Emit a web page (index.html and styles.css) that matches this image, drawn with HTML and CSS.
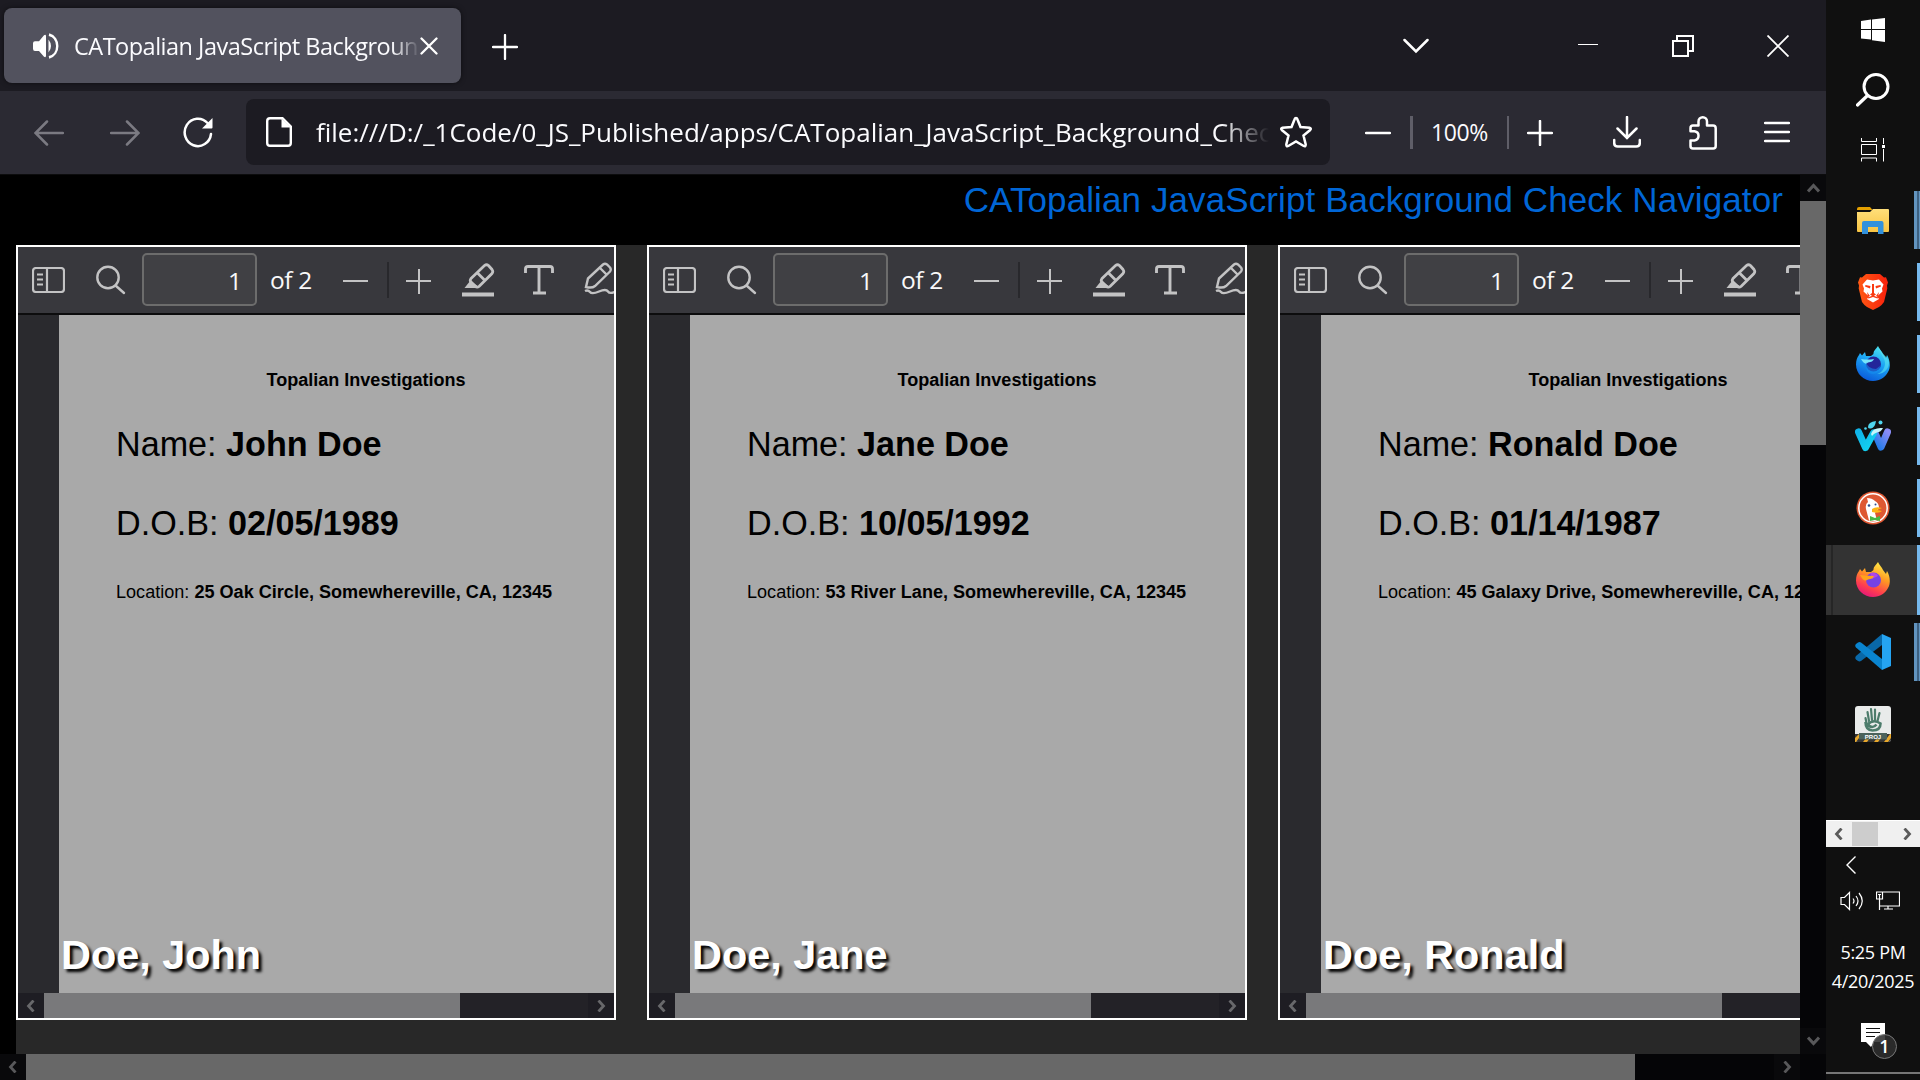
FILE: index.html
```html
<!DOCTYPE html>
<html lang="en">
<head>
<meta charset="utf-8">
<title>CATopalian JavaScript Background Check Navigator</title>
<link rel="stylesheet" href="styles.css">
</head>
<body>
<svg class="defs" width="0" height="0">
  <defs>
    <linearGradient id="g-brave"><stop offset="0" stop-color="#ff5a14"/><stop offset="1" stop-color="#f9200c"/></linearGradient>
    <linearGradient id="g-dev" x1="0.7" y1="0" x2="0.3" y2="1"><stop offset="0" stop-color="#4fe5ef"/><stop offset=".45" stop-color="#1ba4f5"/><stop offset="1" stop-color="#0a58d8"/></linearGradient>
    <linearGradient id="g-fox" x1="0.75" y1="0" x2="0.3" y2="1"><stop offset="0" stop-color="#fff04a"/><stop offset=".4" stop-color="#ff9a22"/><stop offset=".75" stop-color="#ff3d4f"/><stop offset="1" stop-color="#e3167c"/></linearGradient>
    <linearGradient id="g-w1" x1="0" y1="0" x2="1" y2="1"><stop offset="0" stop-color="#10b4e8"/><stop offset="1" stop-color="#12d5f2"/></linearGradient>
    <linearGradient id="g-w2" x1="0" y1="1" x2="1" y2="0"><stop offset="0" stop-color="#1579e8"/><stop offset="1" stop-color="#8a8cf5"/></linearGradient>
    <linearGradient id="g-folder" x1="0" y1="0" x2="0" y2="1"><stop offset="0" stop-color="#ffdf7a"/><stop offset="1" stop-color="#f8c443"/></linearGradient>
  </defs>
  <symbol id="i-sidebar" viewBox="0 0 33 26"><g fill="none" stroke="#c3c3c4" stroke-width="2.200"><rect x="1" y="1" width="31" height="24" rx="3"/><path d="M15 1v24M5 7.500h6M5 12.500h6M5 17.500h6"/></g></symbol>
  <symbol id="i-find" viewBox="0 0 30 30"><g fill="none" stroke="#c3c3c4" stroke-width="2.400" stroke-linecap="round"><circle cx="12" cy="12.500" r="10.700"/><path d="M19.500 20.500l8.500 7.500"/></g></symbol>
  <symbol id="i-marker" viewBox="0 0 33 34"><path d="M0 29.500h32v4H0z" fill="#c3c3c4"/><path d="M2.500 25l6-7.500 7 5.500-1.500 2z" fill="#c3c3c4"/><path d="M9 15.500L22.500 2.500q2-1.500 4 0l3.500 4q1.500 2 0 4L17 23.500q-2 1.500-4-.5L9 19q-1.500-1.500 0-3.500zM15 9.500l8 8" fill="none" stroke="#c3c3c4" stroke-width="2.800"/></symbol>
  <symbol id="i-text" viewBox="0 0 30 30"><path d="M1.500 8V4q0-2.500 2.500-2.500h22q2.500 0 2.500 2.500v4M15 2v26M9 28h13" fill="none" stroke="#c3c3c4" stroke-width="2.900"/></symbol>
  <symbol id="i-pen" viewBox="0 0 34 34"><path d="M2 25l2-8.500L19 2.500q2-1.500 4 0l3 3q1.500 2 0 4L11 24q-3 2.500-9 1zM16 6l7 7" fill="none" stroke="#c3c3c4" stroke-width="2.400"/><path d="M1 29q3-1.500 5 1t9-.5 9 0 9-.5" fill="none" stroke="#c3c3c4" stroke-width="2.400"/></symbol>
  <symbol id="i-left" viewBox="0 0 8 12"><path d="M6.500 0.500L1.500 6l5 5.500" fill="none" stroke="currentColor" stroke-width="2.800"/></symbol>
  <symbol id="i-right" viewBox="0 0 8 12"><path d="M1.500 0.500L6.500 6l-5 5.500" fill="none" stroke="currentColor" stroke-width="2.800"/></symbol>
  <symbol id="i-up" viewBox="0 0 13 10"><path d="M1 8.500L6.500 2.500l5.500 6" fill="none" stroke="currentColor" stroke-width="3"/></symbol>
  <symbol id="i-down" viewBox="0 0 13 10"><path d="M1 1.500L6.500 7.500l5.500-6" fill="none" stroke="currentColor" stroke-width="3"/></symbol>
  <symbol id="i-fox" viewBox="0 0 34 35"><path d="M22 0c1 3 4 5 5 8l3 4 1-3c3 5 4 12 1 17-3 5.500-8 9-15 9C8 35 0 28 0 18.500c0-4 1-7 3-9.500l1-2 2 2.500 3-3.500 1 4h5l2.500-2C17 5 20 3 22 0z"/></symbol>
</svg>

<div class="desktop">
  <main class="browser">
    <header class="tabs">
      <div class="tab">
        <svg class="tab-sound" width="26" height="26" viewBox="0 0 26 24" preserveAspectRatio="none"><path d="M2 7.500h4L11 2q2-1 2 1v18q0 2-2 1l-5-5.500H2q-2 0-2-2v-5q0-2 2-2z" fill="#fff"/><path d="M15.500 6q5 6 0 12z" fill="#fff"/><path d="M16 1.500c11 2.500 11 18.500 0 21" fill="none" stroke="#fff" stroke-width="2.400"/></svg>
        <span class="tab-title">CATopalian JavaScript Backgroun</span>
        <svg class="tab-close" width="18" height="18" viewBox="0 0 18 18"><path d="M1.500 1.500l15 15m0-15l-15 15" stroke="#fff" stroke-width="2.300" stroke-linecap="round"/></svg>
      </div>
      <svg class="new-tab" width="26" height="26" viewBox="0 0 26 26"><path d="M13 1v24M1 13h24" stroke="#fff" stroke-width="2.300" stroke-linecap="round"/></svg>
      <svg class="all-tabs" width="26" height="16" viewBox="0 0 26 16"><path d="M1.500 2L13 13.500 24.500 2" fill="none" stroke="#fff" stroke-width="2.500" stroke-linecap="round"/></svg>
      <svg class="win-min" width="20" height="1" viewBox="0 0 20 1"><path d="M0 .5h20" stroke="#fff"/></svg>
      <svg class="win-max" width="22" height="22" viewBox="0 0 22 22"><path d="M1 6h15v15H1zM5 6V1h16v15h-5" fill="none" stroke="#fff" stroke-width="2"/></svg>
      <svg class="win-close" width="22" height="22" viewBox="0 0 22 22"><path d="M.5 .5l21 21m0-21l-21 21" stroke="#fff" stroke-width="1.800"/></svg>
    </header>

    <nav class="toolbar">
      <svg class="back" width="30" height="26" viewBox="0 0 30 26"><path d="M29 13H2M13 1.500L1.500 13 13 24.500" fill="none" stroke="#7b7a82" stroke-width="2.500" stroke-linecap="round"/></svg>
      <svg class="forward" width="30" height="26" viewBox="0 0 30 26"><path d="M1 13h27M17 1.500L28.500 13 17 24.500" fill="none" stroke="#7b7a82" stroke-width="2.500" stroke-linecap="round"/></svg>
      <svg class="reload" width="30" height="31" viewBox="0 0 30 31"><path d="M28 17A13.200 13.700 0 1 1 24.500 6" fill="none" stroke="#fff" stroke-width="2.500" stroke-linecap="round"/><path d="M29.500 1v9.500q0 1-1 1H19z" fill="#fff"/></svg>
      <div class="urlbar">
        <svg width="26" height="30" viewBox="0 0 26 30"><path d="M4 1.200h12.500L24.800 9.500V26q0 2.800-2.800 2.800H4Q1.200 28.800 1.200 26V4Q1.200 1.200 4 1.200z" fill="none" stroke="#fff" stroke-width="2.400"/><path d="M15.500 1.500v9h9.500z" fill="#fff"/></svg>
        <span class="url">file:///D:/_1Code/0_JS_Published/apps/CATopalian_JavaScript_Background_Chec</span>
        <svg class="star" width="34" height="33" viewBox="0 0 34 33"><path d="M17 2q1 0 1.500 1.500L21.500 11l9 .8q2.200.6.700 2.200L24.500 19.500l2.200 9q0 2.500-2 1.500L17 25.500 9.300 30q-2 1-2-1.500l2.200-9L2.800 14q-1.500-1.600.7-2.200l9-.8 3-7.500Q16 2 17 2z" fill="none" stroke="#fff" stroke-width="2.500"/></svg>
      </div>
      <svg class="zoom-out" width="26" height="4" viewBox="0 0 26 4"><path d="M1 2h24" stroke="#fff" stroke-width="2.500" stroke-linecap="round"/></svg>
      <i class="rule wide"></i>
      <span class="zoom">100%</span>
      <i class="rule"></i>
      <svg class="zoom-in" width="26" height="26" viewBox="0 0 26 26"><path d="M13 1v24M1 13h24" stroke="#fff" stroke-width="2.500" stroke-linecap="round"/></svg>
      <svg class="download" width="28" height="32" viewBox="0 0 28 32"><path d="M14 1v20M4.500 12.500L14 22l9.500-9.500M1.200 24v3q0 3.500 3.500 3.500h18.600q3.500 0 3.500-3.500v-3" fill="none" stroke="#fff" stroke-width="2.500" stroke-linecap="round"/></svg>
      <svg class="extension" width="28" height="34" viewBox="0 0 28 34"><path d="M1.500 12q0-2.500 2.500-2.500h5.500V5.500a4.200 4.200 0 0 1 8.500 0v4h6q2.700 0 2.700 2.700V30q0 2.500-2.500 2.500H4Q1.500 32.500 1.500 30v-5.500h4a4.700 4.700 0 0 0 0-9.300h-4z" fill="none" stroke="#fff" stroke-width="2.500" stroke-linejoin="round"/></svg>
      <svg class="menu" width="26" height="22" viewBox="0 0 26 22"><path d="M1 2h24M1 11h24M1 20h24" stroke="#fff" stroke-width="2.500" stroke-linecap="round"/></svg>
    </nav>

    <div class="view">
      <section class="page">
        <h1>CATopalian JavaScript Background Check Navigator</h1>
        <div class="records">
          <article class="record">
            <div class="pdfbar">
              <svg class="p-side"><use href="#i-sidebar"/></svg><svg class="p-find"><use href="#i-find"/></svg>
              <span class="pageno">1</span><span class="pages">of 2</span>
              <i class="p-minus"></i><i class="p-sep"></i><i class="p-plus"></i>
              <svg class="p-mark"><use href="#i-marker"/></svg><svg class="p-text"><use href="#i-text"/></svg><svg class="p-pen"><use href="#i-pen"/></svg>
            </div>
            <div class="sheet">
              <p class="firm">Topalian Investigations</p>
              <p class="big">Name: <b>John Doe</b></p>
              <p class="big dob">D.O.B: <b>02/05/1989</b></p>
              <p class="loc">Location: <b>25 Oak Circle, Somewhereville, CA, 12345</b></p>
              <h2>Doe, John</h2>
            </div>
            <div class="hbar"><span class="btn"><svg><use href="#i-left"/></svg></span><i class="thumb"></i><span class="btn end"><svg><use href="#i-right"/></svg></span></div>
          </article>
          <article class="record">
            <div class="pdfbar">
              <svg class="p-side"><use href="#i-sidebar"/></svg><svg class="p-find"><use href="#i-find"/></svg>
              <span class="pageno">1</span><span class="pages">of 2</span>
              <i class="p-minus"></i><i class="p-sep"></i><i class="p-plus"></i>
              <svg class="p-mark"><use href="#i-marker"/></svg><svg class="p-text"><use href="#i-text"/></svg><svg class="p-pen"><use href="#i-pen"/></svg>
            </div>
            <div class="sheet">
              <p class="firm">Topalian Investigations</p>
              <p class="big">Name: <b>Jane Doe</b></p>
              <p class="big dob">D.O.B: <b>10/05/1992</b></p>
              <p class="loc">Location: <b>53 River Lane, Somewhereville, CA, 12345</b></p>
              <h2>Doe, Jane</h2>
            </div>
            <div class="hbar"><span class="btn"><svg><use href="#i-left"/></svg></span><i class="thumb"></i><span class="btn end"><svg><use href="#i-right"/></svg></span></div>
          </article>
          <article class="record">
            <div class="pdfbar">
              <svg class="p-side"><use href="#i-sidebar"/></svg><svg class="p-find"><use href="#i-find"/></svg>
              <span class="pageno">1</span><span class="pages">of 2</span>
              <i class="p-minus"></i><i class="p-sep"></i><i class="p-plus"></i>
              <svg class="p-mark"><use href="#i-marker"/></svg><svg class="p-text"><use href="#i-text"/></svg>
            </div>
            <div class="sheet">
              <p class="firm">Topalian Investigations</p>
              <p class="big">Name: <b>Ronald Doe</b></p>
              <p class="big dob">D.O.B: <b>01/14/1987</b></p>
              <p class="loc">Location: <b>45 Galaxy Drive, Somewhereville, CA, 12</b></p>
              <h2>Doe, Ronald</h2>
            </div>
            <div class="hbar"><span class="btn"><svg><use href="#i-left"/></svg></span><i class="thumb"></i></div>
          </article>
        </div>
      </section>
      <div class="vscroll"><span class="vbtn"><svg><use href="#i-up"/></svg></span><i></i><span class="vbtn last"><svg><use href="#i-down"/></svg></span></div>
      <div class="hscroll"><span class="btn"><svg><use href="#i-left"/></svg></span><i></i><span class="btn end"><svg><use href="#i-right"/></svg></span></div>
      <div class="corner"></div>
    </div>
  </main>

  <aside class="taskbar">
    <div class="sys start"><svg width="24" height="24" viewBox="0 0 24 24"><path d="M0 3l10-1.400V11H0zM11 1.500L24 0v11H11zM0 12h10v9.600L0 20.400zM11 12h13v12l-13-1.800z" fill="#fff"/></svg></div>
    <div class="sys"><svg width="34" height="34" viewBox="0 0 34 34"><circle cx="20" cy="13.500" r="12" fill="none" stroke="#fff" stroke-width="3"/><path d="M11.500 22.500L1.500 32" stroke="#fff" stroke-width="3.200" stroke-linecap="round"/></svg></div>
    <div class="sys view-btn"><svg width="24" height="24" viewBox="0 0 24 24"><path d="M.5 0v3.500h15V0M.5 6.500h15v10H.5zM.5 23.500V20h15v3.500M22.500 0v6M22.500 11v12.500" fill="none" stroke="#fff"/><path d="M21 7h3v3h-3z" fill="#fff"/></svg></div>

    <div class="app stack"><svg width="32" height="27" viewBox="0 0 32 27"><path d="M0 2q0-2 2-2h11l2.500 3H0z" fill="#e5a000"/><path d="M0 5h13l3-3h15q1 0 1 1v21q0 1-1 1H1q-1 0-1-1z" fill="url(#g-folder)"/><path d="M5 27V16q0-2 2-2h17.500q2 0 2 2v11H21v-7H11v7z" fill="#3291dc"/></svg></div>
    <div class="app run"><svg width="30" height="36" viewBox="0 0 30 36"><path d="M8 0h14l4 3.500 2-.2 2 5.200-1 3 .3 3L26 28q-2 3-5 5l-6 3-6-3q-3-2-5-5L.700 14.500l.3-3-1-3 2-5.200 2 .2z" fill="url(#g-brave)"/><path d="M9 5.500l6 1 6-1 4.500 5-1.500 4 .5 3-5.500 5 2 2.500L15 28.500 9 25l2-2.500-5.500-5 .5-3-1.500-4z" fill="#fff"/><path d="M7.500 11l5 1-.5 2.500-5-2zM22.500 11l-5 1 .5 2.500 5-2zM14 10h2v9l2 1.500-3 2-3-2 2-1.500zM9 18l3 4-2 .5zM21 18l-3 4 2 .5zM9.500 23.500l5.500-2 5.500 2-1 1L15 23l-4.500 1.500z" fill="#f93a12"/></svg></div>
    <div class="app run raised"><svg width="34" height="35" viewBox="0 0 34 35"><use href="#i-fox" fill="url(#g-dev)"/><path d="M23 2c0 5 6 9 6 15s-4 10-8 11c8 0 12-6 12-12-1-5-7-8-10-14z" fill="#5ce4f2" opacity=".6"/><circle cx="17.500" cy="18" r="7.500" fill="#23269a"/><path d="M5 13q7 1 13 0-1 3-6 3.500Q9 20 5 13z" fill="#77e5fb"/><path d="M10 16q2 7 10 7l4-3q0 7-7 8-8 0-7-12z" fill="#1590f0" opacity=".55"/></svg></div>
    <div class="app run"><svg width="36" height="32" viewBox="0 0 36 32"><path d="M20 13l6 14 6.500-15" fill="none" stroke="url(#g-w2)" stroke-width="7" stroke-linecap="round" stroke-linejoin="round"/><path d="M3.500 12L10.500 27.500 18.500 13" fill="none" stroke="url(#g-w1)" stroke-width="7" stroke-linecap="round" stroke-linejoin="round"/><path d="M16 14q2-7 12-6-2 4-6 4.500-3 .5-5 3.500z" fill="#c5f5fb"/><path d="M13 7q0-5 8-6-1 7-5 7.500-3 0-3-1.500z" fill="#4fd5ee"/><circle cx="25.500" cy="2.500" r="2" fill="#4fd5ee"/><circle cx="10.500" cy="8.500" r="1.300" fill="#4fd5ee"/></svg></div>
    <div class="app run"><svg width="34" height="34" viewBox="0 0 34 34"><circle cx="17" cy="17" r="16.500" fill="#de5833"/><circle cx="17" cy="17" r="14.200" fill="none" stroke="#fff" stroke-width="1.500"/><path d="M11 7q5 0 8 3 4 2 4 7l-4 5 2 7.500q-4 1-8 0L10 18q-1-5 2-7z" fill="#fff"/><path d="M16 18q4-3 10-1l-5 2 5 1q-3 3-10 1z" fill="#fdb515"/><path d="M14 25l5 2 5-2v5l-5-1-5 1z" fill="#47b847"/><circle cx="13" cy="14.500" r="1.300" fill="#2d4f8e"/><circle cx="19.500" cy="13.500" r="1" fill="#2d4f8e"/></svg></div>
    <div class="app run active"><svg width="34" height="35" viewBox="0 0 34 35"><use href="#i-fox" fill="url(#g-fox)"/><circle cx="17.500" cy="18" r="7.500" fill="#7542e5"/><path d="M14 11q6-1 8 3l-6 3z" fill="#b046e8"/><path d="M4 13q8 1 14 1-1 3-6 3.500Q8 21 4 13z" fill="#ffa31c"/></svg></div>
    <div class="app stack"><svg width="36" height="36" viewBox="0 0 36 36"><path d="M27 0L1 22q-1.500 2 0 3.500l2 1.500q1.500.8 3 0L27 11z" fill="#0968a8"/><path d="M27 36L1 13.500q-1.500-2 0-3.500l2-1.500q1.500-.8 3 0L27 25z" fill="#0a84cf"/><path d="M27 0l9 4v28l-9 4z" fill="#25a4f2"/></svg></div>
    <div class="app"><svg width="36" height="36" viewBox="0 0 36 36"><rect width="36" height="36" rx="3" fill="#e9ebea"/><path d="M0 28h36v5q0 3-3 3H3q-3 0-3-3z" fill="#343434"/><path d="M0 32l4-4h3l-6 8H0zM8 36l3-4h4l-3 4zM19 36l3-4h4l-3 4zM29 36l6-8h1v4l-3 4z" fill="#e8a82c"/><rect x="4" y="27" width="28" height="6.500" fill="#4c635b"/><path d="M14 15L12.500 6M17 14L16 3M20 14V3.500M22.500 15L24.500 7M11.500 17L10.500 12" stroke="#4d7c6b" stroke-width="2.200" stroke-linecap="round"/><path d="M10.500 16q0 8 7 8.500 8 0 8-7-7-5-13 1 5 5 9 0" fill="none" stroke="#4d7c6b" stroke-width="2.600"/><text x="18" y="32.500" text-anchor="middle" class="proj">PROJ</text></svg></div>

    <div class="tray">
      <div class="tray-scroll"><svg><use href="#i-left"/></svg><i></i><svg class="r"><use href="#i-right"/></svg></div>
      <svg class="tray-more" width="10" height="18" viewBox="0 0 10 18"><path d="M9.500 .5L1 9l8.500 8.500" fill="none" stroke="#fff" stroke-width="1.400"/></svg>
      <div class="tray-icons">
        <svg width="24" height="20" viewBox="0 0 24 20"><path d="M1 6.500h3.500L9.500 1.500v17l-5-5H1zM13 7.500q2 2.500 0 5M16 5q4 5 0 10M19 2q6.500 8 0 16" fill="none" stroke="#fff" stroke-width="1.200"/></svg>
        <svg width="24" height="19" viewBox="0 0 24 19"><path d="M6.500 1h17v14h-20M.5 1h6v7h-6zM2 3.500h3M3.500 3.500V19M12 15v3M8 18h9" fill="none" stroke="#fff" stroke-width="1.200"/></svg>
      </div>
      <div class="clock"><span>5:25 PM</span><span>4/20/2025</span></div>
      <svg class="notice" width="38" height="38" viewBox="0 0 38 38"><path d="M0 0h24v19H13l-3 5-5-5H0z" fill="#fff"/><path d="M5 5.500h14M5 9.500h14M5 13.500h9" stroke="#111"/><circle cx="23.500" cy="23.500" r="12" fill="#2d2d2d" fill-opacity=".88" stroke="#777"/><text x="23.500" y="30" text-anchor="middle" class="count">1</text></svg>
      <i class="peek"></i>
    </div>
  </aside>
</div>
</body>
</html>
```
FILE: styles.css
```css
* { box-sizing: border-box; }
body { margin: 0; background: #000; font-family: "Liberation Sans", Arial, sans-serif; overflow: hidden; }
svg { display: block; flex: none; }
i { display: block; flex: none; }
.defs { position: absolute; }
.desktop { display: flex; width: 1920px; height: 1080px; }
.browser { width: 1826px; height: 1080px; display: flex; flex-direction: column; overflow: hidden; }

/* tab strip */
.tabs { height: 91px; background: #1c1b22; display: flex; align-items: center; padding-left: 4px; }
.tab { width: 457px; height: 75px; background: #52525e; border-radius: 8px; display: flex; align-items: center; box-shadow: 0 0 5px #0008; padding-left: 29px; font: 23.500px "Open Sans", "Noto Sans", sans-serif; color: #fbfbfe; }
.tab-title { width: 344px; margin-left: 15px; white-space: nowrap; letter-spacing: -0.500px; -webkit-mask-image: linear-gradient(90deg, #000 318px, transparent 346px); mask-image: linear-gradient(90deg, #000 318px, transparent 346px); }
.tab-close { margin-left: 2px; }
.new-tab { margin-left: 31px; margin-top: 2px; }
.all-tabs { margin-left: 885px; }
.win-min { margin-left: 149px; margin-top: -3px; }
.win-max { margin-left: 74px; }
.win-close { margin-left: 73px; }

/* navigation toolbar */
.toolbar { height: 84px; background: #2b2a33; border-bottom: 1px solid #0c0c0d; display: flex; align-items: center; padding-left: 34px; }
.forward { margin-left: 46px; }
.reload { margin-left: 43px; margin-top: -1px; }
.urlbar { width: 1084px; height: 66px; margin-left: 33px; margin-top: -1px; background: #1c1b22; border-radius: 8px; display: flex; align-items: center; padding-left: 20px; }
.url { width: 953px; margin-left: 24px; font: 26px/36px "Open Sans", "Noto Sans", sans-serif; letter-spacing: 0; color: #fbfbfe; white-space: nowrap; -webkit-mask-image: linear-gradient(90deg, #000 905px, transparent 953px); mask-image: linear-gradient(90deg, #000 905px, transparent 953px); }
.star { margin-left: 10px; }
.zoom-out { margin-left: 35px; }
.rule { width: 2px; height: 33px; background: #5f5e68; }
.rule.wide { width: 3px; margin-left: 19px; }
.zoom { width: 94px; text-align: center; padding-right: 1px; margin-top: -2px; font: 23px "Open Sans", "Noto Sans", sans-serif; letter-spacing: -0.350px; color: #fbfbfe; }
.zoom-in { margin-left: 18px; }
.download { margin-left: 60px; margin-top: -2px; }
.extension { margin-left: 48px; }
.menu { margin-left: 47px; margin-top: -2px; }

/* page viewport */
.view { flex: 1; display: grid; grid-template-columns: 1800px 26px; grid-template-rows: 879px 26px; }
.page { overflow: hidden; background: #000; }
h1 { margin: 0; padding-right: 17px; height: 70px; font-size: 35px; line-height: 50px; letter-spacing: 0.100px; font-weight: 400; color: #0066d6; text-align: right; }
.records { display: flex; gap: 31px; margin-left: 16px; height: 809px; width: 1900px; background: #282828; align-items: flex-start; }
.record { width: 600px; height: 775px; border: 2px solid #fff; overflow: hidden; display: flex; flex-direction: column; flex: none; }

.pdfbar { height: 68px; background: #38383d; border-bottom: 2px solid #0c0c0d; display: flex; align-items: center; overflow: hidden; }
.p-side { width: 33px; height: 26px; margin-left: 14px; }
.p-find { width: 30px; height: 30px; margin-left: 31px; margin-top: -1px; }
.pageno { width: 115px; height: 53px; flex: none; margin-left: 16px; margin-top: -1px; background: #404044; border: 2px solid #6c6c6c; border-radius: 5px; text-align: right; padding-right: 13px; font: 24.500px/52px "Open Sans", "Noto Sans", sans-serif; color: #f9f9fa; }
.pages { width: 44px; flex: none; margin-left: 13px; font: 24.500px/50px "Open Sans", "Noto Sans", sans-serif; letter-spacing: -0.400px; white-space: nowrap; color: #f9f9fa; }
.p-minus { width: 25px; height: 2px; margin-left: 29px; margin-top: 2px; background: #c3c3c4; }
.p-sep { width: 2px; height: 36px; margin-left: 19px; background: #28282c; }
.p-plus { width: 25px; height: 25px; margin-left: 17px; margin-top: 2px; background: linear-gradient(#c3c3c4, #c3c3c4) center / 25px 2px no-repeat, linear-gradient(#c3c3c4, #c3c3c4) center / 2px 25px no-repeat; }
.p-mark { width: 33px; height: 34px; margin-left: 31px; margin-top: -1px; }
.p-text { width: 30px; height: 30px; margin-left: 29px; margin-top: -1px; }
.p-pen { width: 34px; height: 34px; margin-left: 30px; margin-top: -2px; }

.sheet { height: 678px; border-left: 41px solid #2a2a2e; background: #a9a9a9; color: #000; padding-top: 54px; display: flex; flex-direction: column; white-space: nowrap; }
.sheet p { margin: 0 0 0 57px; }
.sheet .firm { margin-left: 207.500px; font-weight: 700; font-size: 18.050px; line-height: 22px; }
.sheet .big { font-size: 34.150px; line-height: 40px; margin-top: 33px; }
.sheet .dob { margin-top: 39px; }
.sheet .loc { font-size: 18.080px; line-height: 22px; margin-top: 38px; }
h2 { margin: auto 0 14px 2px; font-size: 41.400px; line-height: 48px; color: #fff; text-shadow: 3px 3px 3px #000; }

.hbar { height: 25px; display: flex; background: #232227; color: #68686b; }
.btn { width: 26px; height: 100%; display: flex; align-items: center; justify-content: center; background: #1e1d23; flex: none; }
.btn svg { width: 10px; height: 12px; }
.btn.end { margin-left: auto; }
.hbar .thumb { width: 416px; background: #79797b; }

.vscroll { display: flex; flex-direction: column; background: #050507; color: #58585a; }
.vbtn { height: 26px; display: flex; align-items: center; justify-content: center; background: #09090b; flex: none; }
.vbtn svg { width: 13px; height: 10px; }
.vbtn.last { margin-top: auto; }
.vscroll i { height: 244px; background: #686868; }
.hscroll { display: flex; background: #050507; color: #58585a; }
.hscroll .btn { background: #09090b; }
.hscroll i { width: 1609px; background: #686868; }
.corner { background: #050507; }

/* vertical taskbar */
.taskbar { width: 94px; background: #101010; display: flex; flex-direction: column; }
.sys { height: 60px; display: flex; align-items: center; justify-content: center; flex: none; }
.app { height: 72px; display: flex; align-items: center; justify-content: center; flex: none; padding-left: 3px; border-right: 3px solid transparent; background-clip: padding-box; }
.app.run, .app.stack { background: linear-gradient(#76b9ed, #76b9ed) right / 3px 58px no-repeat border-box; }
.app.stack { background: linear-gradient(90deg, #6294bf 0 3px, #3d6080 3px 5px, #6294bf 5px) right / 6px 58px no-repeat border-box; }
.app.run.active { height: 70px; margin: 1px 0; padding-bottom: 2px; background: linear-gradient(90deg, #333 5px, #262626 5px 7px, #333 7px 91px, #76b9ed 91px) border-box; }
.app.raised { padding-bottom: 2px; }
.view-btn { height: 64px; padding-bottom: 4px; }
.proj { font: 700 6px "Liberation Sans", sans-serif; fill: #fff; }
.tray { margin-top: auto; height: 260px; display: flex; flex-direction: column; color: #fff; }
.tray-scroll { height: 27px; background: #f0f0f0; border-top: 1px solid #fff; color: #5b5b5b; display: flex; align-items: center; flex: none; }
.tray-scroll svg { width: 10px; height: 12px; margin: 0 8px; }
.tray-scroll i { width: 26px; height: 24px; background: #cdcdcd; }
.tray-scroll .r { margin-left: auto; margin-right: 8px; }
.tray-more { margin: 9px 0 0 20px; }
.tray-icons { display: flex; gap: 12px; margin: 17px 0 0 14px; }
.clock { margin-top: 27px; font: 18px/29px "Open Sans", "Noto Sans", sans-serif; letter-spacing: -0.300px; display: flex; flex-direction: column; align-items: center; white-space: nowrap; }
.notice { margin: 27px 0 0 35px; }
.count { font: 600 18px "Open Sans", sans-serif; fill: #fff; }
.peek { height: 2px; margin-top: auto; margin-bottom: 6px; background: #777; }
```
